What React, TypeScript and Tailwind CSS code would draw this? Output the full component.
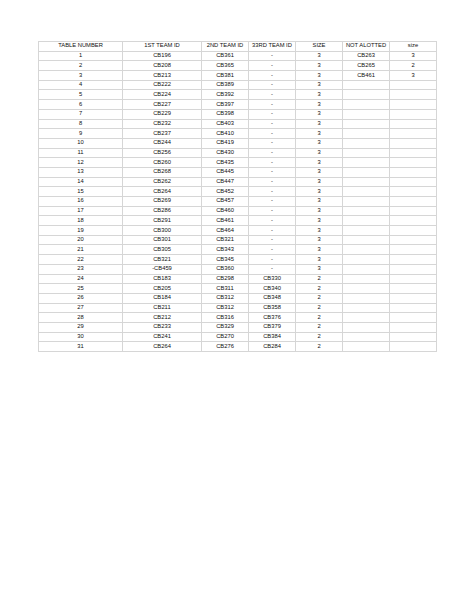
const header = ["TABLE NUMBER", "1ST TEAM ID", "2ND TEAM ID", "33RD TEAM ID", "SIZE", "NOT ALOTTED", "size"];

const rows: string[][] = [
  ["1", "CB196", "CB361", "-", "3", "CB263", "3"],
  ["2", "CB208", "CB365", "-", "3", "CB265", "2"],
  ["3", "CB213", "CB381", "-", "3", "CB461", "3"],
  ["4", "CB222", "CB389", "-", "3", "", ""],
  ["5", "CB224", "CB392", "-", "3", "", ""],
  ["6", "CB227", "CB397", "-", "3", "", ""],
  ["7", "CB229", "CB398", "-", "3", "", ""],
  ["8", "CB232", "CB403", "-", "3", "", ""],
  ["9", "CB237", "CB410", "-", "3", "", ""],
  ["10", "CB244", "CB419", "-", "3", "", ""],
  ["11", "CB256", "CB430", "-", "3", "", ""],
  ["12", "CB260", "CB435", "-", "3", "", ""],
  ["13", "CB268", "CB445", "-", "3", "", ""],
  ["14", "CB262", "CB447", "-", "3", "", ""],
  ["15", "CB264", "CB452", "-", "3", "", ""],
  ["16", "CB269", "CB457", "-", "3", "", ""],
  ["17", "CB286", "CB460", "-", "3", "", ""],
  ["18", "CB291", "CB461", "-", "3", "", ""],
  ["19", "CB300", "CB464", "-", "3", "", ""],
  ["20", "CB301", "CB321", "-", "3", "", ""],
  ["21", "CB305", "CB343", "-", "3", "", ""],
  ["22", "CB321", "CB345", "-", "3", "", ""],
  ["23", "-CB459", "CB360", "-", "3", "", ""],
  ["24", "CB183", "CB298", "CB330", "2", "", ""],
  ["25", "CB205", "CB311", "CB340", "2", "", ""],
  ["26", "CB184", "CB312", "CB348", "2", "", ""],
  ["27", "CB211", "CB312", "CB358", "2", "", ""],
  ["28", "CB212", "CB316", "CB376", "2", "", ""],
  ["29", "CB233", "CB329", "CB379", "2", "", ""],
  ["30", "CB241", "CB270", "CB384", "2", "", ""],
  ["31", "CB264", "CB276", "CB284", "2", "", ""],
];

const widths = ["w-[84px]", "w-[79px]", "w-[47px]", "w-[47px]", "w-[47px]", "w-[47px]", "w-[47px]"];

const cell =
  "h-[9.7px] p-0 border border-[#d6d6d6] text-center align-middle leading-none whitespace-nowrap overflow-hidden";

export default function App() {
  return (
    <div className="min-h-[613px] w-full bg-white pt-[41px] pl-[38px]">
      <table
        className="table-fixed border-collapse w-[398px] text-[5.8px] text-[#111111]"
        style={{ fontFamily: '"Liberation Sans", Arial, sans-serif' }}
      >
        <colgroup>
          {widths.map((w, i) => (
            <col key={i} className={w} />
          ))}
        </colgroup>
        <thead>
          <tr>
            {header.map((h) => (
              <th key={h} className={`${cell} font-normal`}>
                {h}
              </th>
            ))}
          </tr>
        </thead>
        <tbody>
          {rows.map((r) => (
            <tr key={r[0]}>
              {r.map((v, i) => (
                <td key={i} className={cell}>
                  {v}
                </td>
              ))}
            </tr>
          ))}
        </tbody>
      </table>
    </div>
  );
}
